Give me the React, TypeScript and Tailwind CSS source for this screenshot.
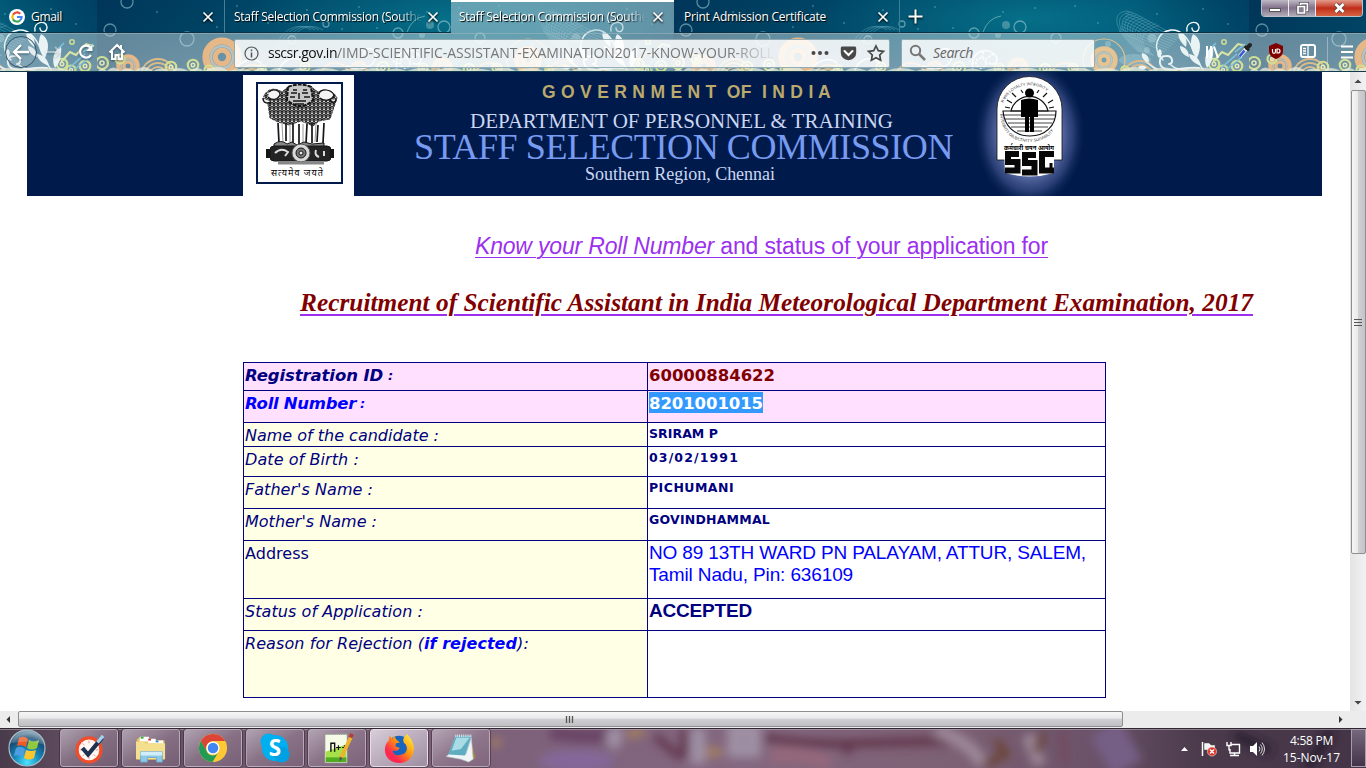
import React, { useLayoutEffect, useRef } from "react";

/** Single-line text whose tracking is adjusted so that it spans `w` pixels. */
function Fit({ w, className = "", children }: { w: number; className?: string; children: React.ReactNode }) {
  const ref = useRef<HTMLSpanElement>(null);
  useLayoutEffect(() => {
    const el = ref.current;
    if (!el) return;
    el.style.letterSpacing = "0px";
    const natural = el.getBoundingClientRect().width;
    const count = (el.textContent || "").length;
    el.style.letterSpacing = `${(w - natural) / count}px`;
  }, [w]);
  return (
    <span ref={ref} className={`inline-block whitespace-pre ${className}`}>
      {children}
    </span>
  );
}

function Ring({ x, y, r, c = "#f0923a", o = 1 }: { x: number; y: number; r: number; c?: string; o?: number }) {
  return (
    <g fill="none" stroke={c} opacity={o}>
      <circle cx={x} cy={y} r={r * 0.8} strokeWidth={r * 0.36} />
      <circle cx={x} cy={y} r={r * 0.34} strokeWidth={r * 0.26} stroke={c} />
      <circle cx={x} cy={y} r={r * 0.55} strokeWidth={r * 0.12} stroke="#f3e3cf" opacity={0.6} />
    </g>
  );
}

const bubbles = [
  [30, 2, 6], [13, 30, 6], [90, 39, 7], [301, 33, 5], [347, 27, 6], [383, 38, 5], [195, 40, 4], [229, 24, 3],
];
const dots = [
  [60, 12], [140, 6], [171, 23], [210, 10], [262, 7], [280, 28], [330, 12], [362, 8], [402, 6], [425, 23], [484, 14], [530, 9], [555, 24], [120, 27], [245, 29],
];
const greens = [
  [5, 63, 8], [23, 59, 6], [74, 67, 7], [96, 65, 7], [112, 70, 6], [165, 69, 5], [208, 67, 6], [286, 68, 8], [326, 68, 6], [372, 69, 7], [400, 68, 6], [452, 70, 5], [541, 64, 7], [550, 70, 6], [564, 66, 7],
];

function Wallpaper() {
  return (
    <svg className="absolute inset-0" width="1366" height="72">
      <defs>
        <linearGradient id="sea" x1="0" y1="0" x2="0" y2="1">
          <stop offset="0" stopColor="#004e70" />
          <stop offset="0.45" stopColor="#005474" />
          <stop offset="1" stopColor="#2b6888" />
        </linearGradient>
        <radialGradient id="glow">
          <stop offset="0" stopColor="#0a8ca0" stopOpacity="0.6" />
          <stop offset="1" stopColor="#0a8ca0" stopOpacity="0" />
        </radialGradient>
        <linearGradient id="shade" x1="0" x2="1">
          <stop offset="0" stopColor="#00284c" stopOpacity="0.65" />
          <stop offset="0.35" stopColor="#00304e" stopOpacity="0.2" />
          <stop offset="0.8" stopColor="#00304e" stopOpacity="0" />
          <stop offset="1" stopColor="#00284c" stopOpacity="0.35" />
        </linearGradient>
        <pattern id="tile" x="97" y="0" width="576" height="72" patternUnits="userSpaceOnUse">
          <rect width="576" height="72" fill="url(#sea)" />
          <ellipse cx="350" cy="18" rx="210" ry="55" fill="url(#glow)" />
          <rect width="576" height="72" fill="url(#shade)" />
          <g fill="#8fd3df" opacity="0.4">
            {dots.map(([x, y]) => <circle key={x} cx={x} cy={y} r="0.9" />)}
          </g>
          <g fill="none" stroke="#b2dbe2" strokeWidth="1.3" opacity="0.5">
            {bubbles.map(([x, y, r]) => <circle key={x} cx={x} cy={y} r={r} />)}
          </g>
          <g fill="#9ec8cf" opacity="0.4">
            <circle cx="333" cy="25" r="4" /><circle cx="325" cy="35" r="3" />
            <circle cx="435" cy="44" r="3" /><circle cx="479" cy="38" r="4.500" /><circle cx="474" cy="50" r="3" />
            <ellipse cx="462" cy="60" rx="16" ry="6" fill="#7db8cc" />
          </g>
          <g fill="none" stroke="#a9d8e4" strokeWidth="0.5" opacity="0.55">
            {[0, 1, 2, 3, 4, 5, 6, 7, 8, 9, 10].map((i) => (
              <path key={i} d={`M${454 + i * 3.2} ${11 + i * 1.4} C${438 + i * 3} ${12 + i * 2} ${440 + i * 2.2} ${30 + i} ${466 + i * 1.5} ${52 + i * 0.4}`} />
            ))}
            {[0, 1, 2, 3, 4, 5, 6, 7, 8].map((i) => (
              <path key={`s${i}`} d={`M${454 - i} ${11 + i * 2.5} C${468 - i} ${14 + i * 3} ${486 - i} ${30 + i * 2} ${508 - i * 2} ${36 + i * 2}`} />
            ))}
            {[0, 4, 8, 12].map((d) => (
              <path key={`w${d}`} d={`M${170 + d} 66 C${178 + d} 38 ${194 + d} 18 ${214 + d} 30`} />
            ))}
          </g>
          <path d="M310 32q5-14 18-16" fill="none" stroke="#6fb3b6" strokeWidth="0.8" />
          <Ring x={125} y={57} r={20} />
          <Ring x={31} y={66} r={12} />
          <Ring x={431} y={60} r={14} c="#f0a648" />
          <circle cx="431" cy="60" r="4.500" fill="none" stroke="#f0a648" strokeWidth="4" />
          <circle cx="431" cy="60" r="21" fill="none" stroke="#d9a04e" strokeWidth="1.2" />
          <Ring x={262} y={69} r={9} o={0.8} />
          <Ring x={345} y={68} r={11} c="#dfa353" />
          <g fill="none" stroke="#d8953f" strokeWidth="1.800">
            <circle cx="61" cy="76" r="17" /><circle cx="61" cy="76" r="13" /><circle cx="61" cy="76" r="9" />
            <circle cx="155" cy="79" r="14" /><circle cx="155" cy="79" r="10" />
            <circle cx="238" cy="78" r="15" /><circle cx="392" cy="77" r="14" />
            <circle cx="467" cy="79" r="18" /><circle cx="467" cy="79" r="14" />
          </g>
          <circle cx="505" cy="74" r="6" fill="#dd953b" />
          {greens.map(([x, y, r]) => (
            <g key={x} fill="none" stroke="#cedb4e">
              <circle cx={x} cy={y} r={r * 0.75} strokeWidth="2.2" />
              <circle cx={x} cy={y} r={r * 0.25} strokeWidth="1.6" stroke="#e9e58a" />
            </g>
          ))}
          <circle cx="551" cy="42" r="2.2" fill="none" stroke="#c3d550" strokeWidth="1.500" />
          <path d="M540 62l9-10 6 3 10-11 8 2" stroke="#d7e36a" strokeWidth="2" fill="none" />
          <g fill="none" stroke="#f4fbfb" strokeLinecap="round" strokeWidth="1.400">
            <path d="M490 60C478 48 484 32 498 30c12-1 18 10 22 20 3 9 6 14 10 20" />
            <path d="M526 68c-12-2-26 4-34 1-8-4-6-13 1-13 7-1 8 8 3 8" strokeWidth="2" />
            <path d="M514 31c-2-9 11-12 12-4 0 6-7 6-7 1" />
            <path d="M484 69c-6-2-12-8-14-12m28 8c4 4 10 5 16 5" />
            <path d="M250 66c16 8 32-2 28-13-3-7-12-5-11 1M300 68c-3-12 8-22 20-15 8 6 2 14-4 10M182 70c4-11 16-15 24-8M140 67c8-8 17-10 24-4" />
          </g>
          <g fill="#f8fdfd">
            <path d="M520 34c8 4 9 14 4 24-6-5-8-16-4-24zM513 47c-6-5-9-11-7-16 6 3 9 9 7 16zM516 57c-6-2-9-6-9-11 6 1 9 6 9 11zM534 68c-4-8-1-18 6-22 1 9-1 17-6 22zM528 66c-8-3-12-8-12-12 7 1 11 6 12 12zM476 62c-5-1-8-5-7-9 5 1 7 4 7 9zM486 58c-3-3-2-7 1-9 3 3 2 7-1 9zM474 68c-4 2-7 2-9-1 3-2 6-2 9 1z" />
          </g>
          <g stroke="#f4fbfb" strokeWidth="2" strokeDasharray="2 1.500" fill="none">
            <circle cx="308" cy="63" r="5" /><path d="M296 61l6 3m8-12-1 7m11-5-7 5" />
          </g>
          <path d="M562 52l10-8m-24 24 16-14m-10 15 15-12m-32-8 6-6" stroke="#2fa8d8" strokeWidth="1.500" fill="none" />
          <path d="M0 72q5-6 10-1q6-7 13 0q7-5 15 0q9-8 18 0q8-5 16 0q9-6 20 0q8-6 15 0q16-8 24 0q12-4 25 0q8-6 16 0q8-6 22 0q8-6 19 0q15-6 30 0q12-5 24 0q8-6 22 0q9-5 21 0q15-6 27 0q18-7 30 0q12-5 28 0q12-7 24 0q15-6 28 0q16-8 27 0q18-7 32 0q22-7 45 0z" fill="#f3f0d4" opacity="0.75" />
        </pattern>
      </defs>
      <rect width="1366" height="72" fill="url(#tile)" />
    </svg>
  );
}

function Close() {
  return (
    <svg width="12" height="12" viewBox="0 0 12 12" className="shrink-0 drop-shadow-[0_1px_1px_#000]">
      <path d="M1.500 1.500l9 9m0-9l-9 9" stroke="#fff" strokeWidth="1.700" />
    </svg>
  );
}

const ui = "font-['Open_Sans','Noto_Sans',sans-serif]";
const tabText = "text-[12px] leading-[18px] text-white [text-shadow:1px_1px_1px_#000]";

function Tabs() {
  return (
    <div className="relative flex h-[33px]">
      <div className="flex w-[225px] items-center border-r border-[#4a7e94] border-b border-b-[#0d3145] pt-px pr-[10px] pl-[9px]">
        <svg width="16" height="16" viewBox="0 0 16 16" className="mr-[6px]">
          <circle cx="8" cy="8" r="8" fill="#fff" />
          <g fill="none" strokeWidth="2.200">
            <path d="M4 5.800A4.600 4.600 0 0 1 11.200 4.700" stroke="#ea4335" />
            <path d="M4 10.200a4.600 4.600 0 0 1 0-4.400" stroke="#fbbc05" />
            <path d="M11 11.500A4.600 4.600 0 0 1 4 10.200" stroke="#34a853" />
            <path d="M8 8h4.600a4.600 4.600 0 0 1-1.600 3.500" stroke="#4285f4" />
          </g>
        </svg>
        <Fit w={31} className={tabText}>Gmail</Fit>
        <span className="flex-1" />
        <Close />
      </div>
      <div className="flex w-[226px] items-center border-b border-[#0d3145] pt-px pr-[12px] pl-[9px]">
        <span className="flex w-[190px] [mask-image:linear-gradient(to_right,#000_87%,#0000_99%)]">
          <Fit w={189} className={tabText}>Staff Selection Commission (Southe</Fit>
        </span>
        <span className="flex-1" />
        <Close />
      </div>
      <div className="flex w-[223px] items-center border-t-2 border-white bg-[#a3c8d2]/60 pr-[10px] pb-[2px] pl-[8px]">
        <span className="flex w-[190px] [mask-image:linear-gradient(to_right,#000_87%,#0000_99%)]">
          <Fit w={189} className={tabText}>Staff Selection Commission (Southe</Fit>
        </span>
        <span className="flex-1" />
        <Close />
      </div>
      <div className="flex w-[226px] items-center border-r border-r-[#3f7d94] border-b border-b-[#0d3145] pt-px pr-[10px] pl-[10px]">
        <Fit w={142} className={tabText}>Print Admission Certificate</Fit>
        <span className="flex-1" />
        <Close />
      </div>
      <div className="flex flex-1 items-center border-b border-[#0d3145] pl-[8px]">
        <svg width="15" height="15" viewBox="0 0 15 15" className="drop-shadow-[0_1px_1px_#000]">
          <path d="M7.500 .5v14M.5 7.500h14" stroke="#fff" strokeWidth="2" />
        </svg>
      </div>
      <div className="absolute top-0 left-[1261px] flex h-[17px] w-[102px] overflow-hidden rounded-b-[4px] border border-t-0 border-[#e6e2e8]/80">
        <div className="flex w-[27px] items-end justify-center border-r border-[#eee] bg-linear-to-b from-[#c0b9c5] via-[#81718b] to-[#b3abb8] pb-[4px]">
          <span className="h-[4px] w-[12px] border border-[#555] bg-white" />
        </div>
        <div className="flex w-[27px] items-center justify-center border-r border-[#eee] bg-linear-to-b from-[#c0b9c5] via-[#81718b] to-[#b3abb8]">
          <svg width="13" height="13" viewBox="0 0 13 13" fill="#8a7d93">
            <path d="M4.500 1.500h7v7h-7z" stroke="#555" strokeWidth="3" />
            <path d="M4.500 1.500h7v7h-7z" stroke="#fff" strokeWidth="1.500" />
            <path d="M2 4.500h6.500V11H2z" stroke="#555" strokeWidth="3" />
            <path d="M2 4.500h6.500V11H2z" stroke="#fff" strokeWidth="1.700" />
          </svg>
        </div>
        <div className="flex flex-1 items-center justify-center bg-linear-to-b from-[#e29a8b] via-[#c02b16] to-[#d66243]">
          <svg width="13" height="12" viewBox="0 0 13 12">
            <path d="M2.500 2l8 8m0-8l-8 8" stroke="#544" strokeWidth="4.500" />
            <path d="M2.500 2l8 8m0-8l-8 8" stroke="#fff" strokeWidth="2.800" />
          </svg>
        </div>
      </div>
    </div>
  );
}

function Toolbar() {
  return (
    <div className="relative flex h-[39px] items-center border-t border-[#9bb6bf]/60 border-b border-b-[#123c4e] bg-[#d9e6e9]/45 pt-px">
      <svg width="234" height="38" viewBox="0 0 234 38" className="shrink-0" fill="none">
        <circle cx="21" cy="18" r="15.500" fill="#c2d0db" fillOpacity=".2" stroke="#35536a" strokeWidth="1" />
        <g className="drop-shadow-[0_1px_1px_#1238]">
          <path d="M29 18H14m7-7-7 7 7 7" stroke="#fff" strokeWidth="2.300" />
          <path d="M46 18h14m-5-5 5 5-5 5" stroke="#fff" strokeOpacity=".45" strokeWidth="2" />
          <path d="M90.500 13.500A6 6 0 1 0 91 21" stroke="#fff" strokeWidth="2.200" />
          <path d="M92.500 10.500v6.500H86z" fill="#fff" />
          <path d="M109.500 18.500 117 11l7.500 7.500M112 17v8h3.500v-4h3v4h3.500v-8" stroke="#fff" strokeWidth="2.100" />
          <path d="M121 11v4" stroke="#fff" strokeWidth="2" />
        </g>
      </svg>
      <div className="flex h-[29px] w-[656px] shrink-0 items-center rounded-[2px] border border-[#557985]/60 bg-white/85 pl-[9px]">
        <svg width="15" height="15" viewBox="0 0 15 15" className="mr-[9px] shrink-0" fill="none" stroke="#555">
          <circle cx="7.500" cy="7.500" r="6.500" strokeWidth="1.200" />
          <path d="M7.500 6.500v5m0-8v1.700" strokeWidth="1.500" />
        </svg>
        <span className="flex w-[512px] shrink-0 text-[14px] leading-[20px] whitespace-nowrap text-[#777] [mask-image:linear-gradient(to_right,#000_90%,#0000_99%)]">
          <Fit w={69} className="text-[#111]">sscsr.gov.in</Fit>
          <Fit w={437}>/IMD-SCIENTIFIC-ASSISTANT-EXAMINATION2017-KNOW-YOUR-ROLL</Fit>
        </span>
        <svg width="78" height="20" viewBox="0 0 78 20" className="ml-[29px] shrink-0" fill="#484848">
          <circle cx="4.500" cy="10" r="2" /><circle cx="11" cy="10" r="2" /><circle cx="17.500" cy="10" r="2" />
          <path d="M33.500 3.500h12c1 0 1.700.6 1.700 1.700V10a7.700 7.200 0 0 1-15.400 0V5.200c0-1 .6-1.700 1.700-1.700z" />
          <path d="M35.500 8l4 4 4-4" stroke="#fff" strokeWidth="2" fill="none" strokeLinecap="round" />
          <path d="M67 3l2.300 4.700 5.200.7-3.800 3.600.9 5.200L67 14.700l-4.600 2.500.9-5.200-3.800-3.600 5.200-.7z" fill="none" stroke="#484848" strokeWidth="1.700" />
        </svg>
      </div>
      <div className="ml-[11px] flex h-[29px] w-[194px] shrink-0 items-center rounded-[2px] border border-[#557985]/60 bg-white/85 pl-[7px]">
        <svg width="18" height="18" viewBox="0 0 18 18" fill="none" stroke="#777" strokeWidth="2">
          <circle cx="6.500" cy="6.500" r="4.700" /><path d="M10 10l6 6" strokeWidth="2.500" />
        </svg>
        <Fit w={40} className="ml-[6px] text-[14px] leading-[20px] text-[#666] italic">Search</Fit>
      </div>
      <svg width="271" height="38" viewBox="1095 0 271 38" className="shrink-0" fill="none">
        <path d="M1207 12v12m4-12v12m3-11.500 4 11.500" stroke="#fff" strokeWidth="2" />
        <path d="M1239.500 22.500l7-8" stroke="#eee" strokeWidth="4" />
        <path d="M1239.500 22.500l5-6" stroke="#3158d7" strokeWidth="2.500" />
        <path d="M1244.500 12l4.500 4.500" stroke="#222" strokeWidth="2.500" /><path d="M1247 14l3-3" stroke="#222" strokeWidth="4" strokeLinecap="round" />
        <path d="M1276 9l7 3v5c0 4-3 6.500-7 8-4-1.500-7-4-7-8v-5z" fill="#800000" />
        <path d="M1272.500 15v2.500c0 2.500 3 2.500 3 0V15m1.500 0v4h1a2 2 0 0 0 0-4z" stroke="#fff" strokeWidth="1.200" />
        <rect x="1301" y="11" width="14" height="12" rx="2" stroke="#fff" strokeWidth="2" />
        <path d="M1308 11v12m-5-8.500h3m-3 2.500h3m-3 2.500h3" stroke="#fff" strokeWidth="1.300" />
        <path d="M1327.500 3v29" stroke="#d8e4ea" strokeOpacity=".45" />
        <path d="M1341 12.500h12m-12 5.500h12m-12 5.500h12" stroke="#fff" strokeWidth="2.200" />
      </svg>
    </div>
  );
}

function Emblem() {
  return (
    <svg width="83" height="98" viewBox="0 0 83 98" fill="none" stroke="#161616">
      <defs>
        <pattern id="fur" width="4" height="4" patternUnits="userSpaceOnUse">
          <rect width="4" height="4" fill="#d2d2d2" />
          <path d="M0 1l2 2 2-2M0 3l1 1m2 0 1-1" stroke="#111" strokeWidth=".8" fill="none" />
        </pattern>
      </defs>
      <path d="M7 10c4-6 11-6 17-2l7-6h21l8 6c8-4 16-1 19 6l-3 9-4 12-11 2-6 5-12-5-12 4-11-3-8-4-2-14-5-6z" fill="url(#fur)" stroke="#444" strokeDasharray="3 1" />
      <path d="M11 8c4-4 11-2 11 3-3 5-8 6-12 2m51-3c2-6 12-5 15 1-2 5-9 7-14 3" fill="#f4f4f4" strokeWidth="1.200" />
      <path d="M5 14c0 5 4 6 8 4m59-2c2 3 6 3 6-1" fill="#eee" strokeWidth="1.500" />
      <path d="M30 3q12-5 23 0l2 13q-12 12-26 0z" fill="#c8c8c8" strokeWidth="2" strokeDasharray="4 1" />
      <path d="M33 9h6m5 0h6m-9 0v6m-6 2h13m-11 3h9M35 6h4m6 0h4M32 13h5m9 0h6" strokeWidth="1.500" />
      <path d="M20 39l1 20m7-20v18m7-18v21m6-20v21m8-21-1 20m6-21v20m6-18-1 17m7-19-1 20" strokeWidth="1.700" />
      <path d="M24 40l1 18m7-18v18m13-18v18m13-18-1 18" stroke="#999" strokeWidth="1" />
      <path d="M16 60q7-5 13 0l5-2 5 3 7-3 8 2 12-1v5H16z" fill="#888" />
      <rect x="12" y="62" width="61" height="15" rx="4" fill="#242424" />
      <path d="M10 65v9m64-9v9" strokeWidth="4" />
      <circle cx="43" cy="69" r="9" fill="#d8d8d8" stroke="#555" />
      <circle cx="43" cy="69" r="5" fill="#777" /><circle cx="43" cy="69" r="2" fill="#eee" />
      <path d="M17 69q6-6 13-1l-3 4m31-6q-2 5 3 7m5-6v5" stroke="#ddd" strokeWidth="2" />
      <path d="M20 79h46" stroke="#888" strokeWidth="3" />
    </svg>
  );
}

function SscLogo() {
  return (
    <svg width="110" height="124" viewBox="0 0 110 124">
      <defs>
        <radialGradient id="halo">
          <stop offset="0" stopColor="#c3cdf0" /><stop offset=".6" stopColor="#6475ad" stopOpacity=".85" />
          <stop offset=".8" stopColor="#3a4d87" stopOpacity=".7" />
          <stop offset="1" stopColor="#0d2758" stopOpacity="0.1" />
        </radialGradient>
        <path id="arc" d="M27 36a28 28 0 0 1 55 0" />
        <path id="under" d="M25 42q3 28 30 28 26-1 29-28" />
      </defs>
      <ellipse cx="55" cy="62" rx="54" ry="72" fill="url(#halo)" />
      <path d="M22 88V37a32 32 0 0 1 65 0v51z" fill="#fff" stroke="#111" strokeWidth=".8" />
      <g stroke="#111" strokeWidth="1.200" fill="none">
        <path d="M36 39a19 19 0 0 1 37 0z" />
        <path d="M37 31l-5-3m9-3-4-4m11 0-2-3m27 13 5-3m-10-3 4-4m-10 0 2-3M35 36l-5-1m44 1 5-1" />
        <path d="M28 39h53c0 15-11 25-26 25S29 54 28 39z" />
        <path d="M29 43h51M30 47h49M33 51h44M36 55h37M42 59h25" strokeWidth=".8" />
      </g>
      <circle cx="54.500" cy="21" r="4.500" />
      <path d="M46 28q8-3 17 0v17h-4V32v28h-4V45h-1v15h-4V32v13h-4z" />
      <text className="font-['Liberation_Sans',sans-serif]" fontSize="4" fill="#444"><textPath href="#arc" startOffset="5">समानता  LOYALTY  INTEGRITY</textPath></text>
      <text className="font-['Liberation_Sans',sans-serif]" fontSize="4" fill="#333"><textPath href="#under">INTEGRITY OBJECTIVITY SUITABILITY</textPath></text>
      <text x="29" y="78" fontSize="7" fontWeight="700" textLength="50" lengthAdjust="spacingAndGlyphs">कर्मचारी चयन आयोग</text>
      <path d="M29 79l1 22q25 7 49 0V79z" fill="#fff" />
      <g fill="none" stroke="#080808" strokeWidth="6">
        <path d="M44 82H33v8h9.500v8.500H30" /><path d="M61 83H50v8h9.500v9.500H47" /><path d="M79 82H67v16.500h12" /><path d="M76 98v-7" strokeWidth="3" />
      </g>
    </svg>
  );
}

function Banner() {
  return (
    <div className="ml-[27px] flex h-[124px] w-[1295px] bg-[#001b4b]">
      <div className="mt-[3px] ml-[216px] h-[121px] w-[111px] shrink-0 bg-white pt-[7px] pl-[13px]">
        <div className="relative h-[102px] w-[87px] border-2 border-[#001b4b]">
          <Emblem />
          <Fit w={56} className="absolute top-[83px] left-[13px] font-sans text-[9px] leading-[12px] text-black">सत्यमेव जयते</Fit>
        </div>
      </div>
      <div className="ml-[60px] flex w-[540px] flex-col font-['Liberation_Serif',serif] text-[#cbd7f3]">
        <Fit w={289} className="mt-[9px] ml-[128px] self-start font-['Liberation_Sans',sans-serif] text-[17.500px] leading-[22px] font-bold text-[#bba96d]">G O V E R N M E N T  OF  I N D I A</Fit>
        <Fit w={423} className="mt-[7px] ml-[56px] self-start text-[21px] leading-[23px]">DEPARTMENT OF PERSONNEL &amp; TRAINING</Fit>
        <Fit w={539} className="-mt-[1px] self-start text-[36px] leading-[30px] text-[#789bf1]">STAFF SELECTION COMMISSION</Fit>
        <Fit w={190} className="mt-[2px] ml-[171px] self-start text-[18px] leading-[20px]">Southern Region, Chennai</Fit>
      </div>
      <div className="ml-[21px]"><SscLogo /></div>
    </div>
  );
}

const label = "flex items-start border-r border-b border-[#000080] pl-px";
const value = "flex items-start border-b border-[#000080] pl-px";
const plain = "mt-[2px] text-[16px] leading-[21px] italic";
const strong = "text-[12.500px] leading-[16px] font-bold mt-[3px]";

function Row({ h, pink, l, v }: { h: string; pink?: boolean; l: React.ReactNode; v?: React.ReactNode }) {
  return (
    <div className={`grid grid-cols-[404px_457px] ${h}`}>
      <div className={`${label} ${pink ? "bg-[#ffe0ff]" : "bg-[#ffffe6]"}`}>{l}</div>
      <div className={`${value} ${pink ? "bg-[#ffe0ff]" : "bg-white"}`}>{v}</div>
    </div>
  );
}

function Details() {
  return (
    <div className="ml-[243px] w-[863px] border border-b-0 border-[#000080] font-['DejaVu_Sans',sans-serif] text-[#000080]">
      <Row h="h-[28px]" pink
        l={<span className="flex pt-[2px] leading-[22px] font-bold italic"><Fit w={138} className="text-[16.500px]">Registration ID</Fit><span className="ml-[5px] text-[13px] leading-[22px]">:</span></span>}
        v={<Fit w={126} className="pt-[2px] text-[16.500px] leading-[22px] font-bold text-[#800000]">60000884622</Fit>} />
      <Row h="h-[32px]" pink
        l={<span className="flex pt-[2px] leading-[22px] font-bold text-[#0000ff] italic"><Fit w={111} className="text-[16.500px]">Roll Number</Fit><span className="ml-[4px] text-[13px] leading-[22px]">:</span></span>}
        v={<Fit w={114} className="mt-[1px] h-[21px] bg-[#3399ff] pt-px text-[16.500px] leading-[22px] font-bold text-white">8201001015</Fit>} />
      <Row h="h-[24px]" l={<Fit w={194} className={plain}>Name of the candidate :</Fit>} v={<Fit w={69} className={strong}>SRIRAM P</Fit>} />
      <Row h="h-[30px]" l={<Fit w={114} className={plain}>Date of Birth :</Fit>} v={<Fit w={90} className={strong}>03/02/1991</Fit>} />
      <Row h="h-[32px]" l={<Fit w={128} className={plain}>Father's Name :</Fit>} v={<Fit w={85} className={strong}>PICHUMANI</Fit>} />
      <Row h="h-[32px]" l={<Fit w={132} className={plain}>Mother's Name :</Fit>} v={<Fit w={121} className={strong}>GOVINDHAMMAL</Fit>} />
      <Row h="h-[58px]" l={<Fit w={64} className="mt-[2px] text-[16px] leading-[21px]">Address</Fit>}
        v={<div className="flex flex-col items-start pt-px font-['Liberation_Sans',sans-serif] text-[19px] leading-[22px] text-[#0000ff]"><Fit w={437}>NO 89 13TH WARD PN PALAYAM, ATTUR, SALEM,</Fit><Fit w={204}>Tamil Nadu, Pin: 636109</Fit></div>} />
      <Row h="h-[32px]" l={<Fit w={178} className={plain}>Status of Application :</Fit>}
        v={<Fit w={103} className="mt-px font-['Liberation_Sans',sans-serif] text-[19px] leading-[22px] font-bold">ACCEPTED</Fit>} />
      <Row h="h-[67px]" l={<span className="flex"><Fit w={179} className={plain}>Reason for Rejection (</Fit><Fit w={93} className={`${plain} font-bold text-[#0000ff]`}>if rejected</Fit><Fit w={12} className={plain}>):</Fit></span>} />
    </div>
  );
}

function Page() {
  return (
    <div className="h-[639px] w-[1350px] shrink-0 overflow-hidden bg-white">
      <Banner />
      <div className="mt-[35px] ml-[475px] flex font-['Liberation_Sans',sans-serif] text-[23px] leading-[30px] text-[#9b30ef] [text-underline-offset:3px]">
        <Fit w={239} className="italic underline decoration-1">Know your Roll Number</Fit>
        <Fit w={334} className="underline decoration-1"> and status of your application for</Fit>
      </div>
      <div className="mt-[24px] ml-[300px] h-[77px] font-['Liberation_Serif',serif] text-[25.300px] leading-[34px] font-bold text-[#800000] italic">
        <Fit w={953} className="underline decoration-[#9b30ef] decoration-2 [text-underline-offset:3px]">Recruitment of Scientific Assistant in India Meteorological Department Examination, 2017</Fit>
      </div>
      <Details />
    </div>
  );
}

function VScroll() {
  return (
    <div className="flex h-[639px] w-[16px] flex-col items-center bg-linear-to-r from-[#e4e4e4] to-[#f2f2f2]">
      <svg width="16" height="18"><path d="M4.500 11h7L8 7.500z" fill="#444" /></svg>
      <div className="flex h-[464px] w-[15px] flex-col items-center justify-center rounded-[2px] border border-[#8e8e8e] bg-[linear-gradient(to_right,#f6f6f6_0%,#e9e9eb_45%,#d2d2d5_50%,#c2c2c7_100%)] pr-px pb-px">
        <svg width="8" height="8"><path d="M0 1.500h8M0 4.500h8M0 7.500h8" stroke="#555" /></svg>
      </div>
      <span className="flex-1" />
      <svg width="16" height="17"><path d="M4.500 7h7L8 10.500z" fill="#444" /></svg>
    </div>
  );
}

function HScroll() {
  return (
    <div className="flex h-[17px] bg-[#ececec]">
      <svg width="18" height="17"><path d="M10 5v7L6.500 8.500z" fill="#333" /></svg>
      <div className="flex h-[16px] w-[1105px] items-center justify-center rounded-[2px] border border-[#8e8e8e] bg-[linear-gradient(to_bottom,#f6f6f6_0%,#e9e9eb_45%,#d0d0d3_50%,#c0c0c4_100%)] pr-[2px]">
        <svg width="9" height="7"><path d="M1.500 0v7M4.500 0v7M7.500 0v7" stroke="#555" strokeWidth="1.300" /></svg>
      </div>
      <span className="flex-1" />
      <svg width="43" height="17"><path d="M16 5v7l3.500-3.500z" fill="#333" /></svg>
    </div>
  );
}

function TaskWallpaper() {
  return (
    <svg width="1366" height="40" className="absolute inset-0">
      <defs>
        <linearGradient id="bar" x1="0" x2="1">
          <stop offset="0" stopColor="#493b4b" /><stop offset=".05" stopColor="#604c60" /><stop offset=".32" stopColor="#7c6079" />
          <stop offset=".55" stopColor="#83677f" /><stop offset=".7" stopColor="#7c6073" /><stop offset=".8" stopColor="#6b5269" />
          <stop offset=".88" stopColor="#4a3a4b" /><stop offset="1" stopColor="#443447" />
        </linearGradient>
        <filter id="soft" filterUnits="userSpaceOnUse" x="0" y="-20" width="1366" height="80"><feGaussianBlur stdDeviation="5" /></filter>
      </defs>
      <rect width="1366" height="40" fill="url(#bar)" />
      <g filter="url(#soft)" fill="none">
        <path d="M550 4q40 8 70 0" stroke="#6b4566" strokeWidth="15" />
        <ellipse cx="577" cy="33" rx="38" ry="11" fill="#84689a" />
        <path d="M612 0q6 10-2 18M698 0v36M735 2h18v20h-18z" stroke="#9f90a4" strokeWidth="15" />
        <path d="M655 8l26 22M684 0v30" stroke="#63394f" strokeWidth="8" />
        <path d="M765 10q38 6 80 6 37-2 120-3M850 12l-3 14" stroke="#603449" strokeWidth="8" />
        <path d="M627 7l17-5M706 24h16M496 10v9" stroke="#a5805f" strokeWidth="9" />
        <path d="M770 28q30-4 60 8" stroke="#94677c" strokeWidth="16" />
        <path d="M1062 3l3 34" stroke="#74485c" strokeWidth="7" />
        <path d="M936 2q35 12 47 35m45-30 12 30" stroke="#9c8797" strokeWidth="13" />
        <path d="M996 12l10 14-22 11m52-12 6-20" stroke="#6b4233" strokeWidth="7" />
        <path d="M1105 0l22 40" stroke="#765e85" strokeWidth="34" />
        <path d="M1235 7l36 16m60-20q-12 20-24 37" stroke="#281d2e" strokeWidth="9" />
      </g>
      <path d="M0 .5h1366" stroke="#302831" /><path d="M0 1.500h1366" stroke="#b6a8b5" strokeOpacity=".6" />
    </svg>
  );
}

const icons: React.ReactNode[] = [
  <g key="ticktick"><circle cx="16" cy="18" r="14.500" fill="#f04d2a" /><circle cx="16" cy="18" r="11" fill="#fff8f4" /><path d="M16 8v3m10 7h-3M16 28v-3M6 18h3m0-7 2 2m12 12-2-2M9 25l2-2" stroke="#e99786" /><path d="M9 16l6 7L30 5" stroke="#1f3150" strokeWidth="4.500" fill="none" /><path d="M25 10l6-7" stroke="#a6d4f0" strokeWidth="3.500" /></g>,
  <g key="explorer"><path d="M3 5h9l2 3h16v20H1V7z" fill="#e5c96b" stroke="#c4a65a" /><path d="M4 4h10v5H4zm9 2h8v5h-8zm8 2h8v5h-8z" fill="#fff" /><path d="M5 5h3" stroke="#2cad34" strokeWidth="2" /><path d="M13 7h3" stroke="#cf4435" strokeWidth="2" /><path d="M21 9h3" stroke="#2c8bd5" strokeWidth="2" /><path d="M0 9h8l2 2h21v17H0z" fill="#f4df8f" /><path d="M5 31V20h23v11h-6v-5H12v5z" fill="#8dcaea" stroke="#6fa9ca" /><path d="M5 20h23v4H5z" fill="#d1eefa" /></g>,
  <g key="chrome"><circle cx="16" cy="16" r="15" fill="#fcc934" /><path d="M3 8.500A15 15 0 0 1 29 8.500H16a8 8 0 0 0-7 11z" fill="#db4437" /><path d="M3 8.500A15 15 0 0 0 15.500 31L22 20a7 7 0 0 1-13-1z" fill="#219b55" /><circle cx="16" cy="16" r="7" fill="#fff" /><circle cx="16" cy="16" r="5.600" fill="#4285f4" /></g>,
  <g key="skype"><circle cx="16" cy="16" r="14" fill="#00aff0" /><circle cx="9" cy="9" r="8.500" fill="#00aff0" /><circle cx="23" cy="23" r="8.500" fill="#00a1e2" /><text x="16" y="24.500" textAnchor="middle" fontSize="24" fontWeight="700" fill="#fff" className="font-['Open_Sans',sans-serif]">S</text></g>,
  <g key="npp"><path d="M3 1h24v31H3z" fill="#f6fbe8" stroke="#888" /><path d="M4 20l22-8v19H4z" fill="#a6e04a" /><path d="M4 26h22v5H4z" fill="#4fac20" /><path d="M4 1h23" stroke="#999" strokeWidth="2" strokeDasharray="1 1" /><path d="M9.500 20V11h4v9" fill="none" stroke="#111" strokeWidth="1.500" /><path d="M15 15.500h5m-2.500-2.500v5m4-2.500h5m-2.500-2.500v5" stroke="#111" strokeWidth="1.200" /><path d="M20 27L31 4" stroke="#efb32c" strokeWidth="4" /><path d="M30.500 5l1.500-4" stroke="#b63a35" strokeWidth="4" /><path d="M18.500 30l.5-5 3.500 2z" fill="#555" /></g>,
  <g key="firefox"><defs><linearGradient id="fox" x1=".9" y1="0" x2=".1" y2=".8"><stop offset="0" stopColor="#fff044" /><stop offset=".45" stopColor="#ff980e" /><stop offset=".85" stopColor="#ff2850" /></linearGradient></defs><circle cx="16" cy="15" r="12" fill="#1565c0" /><path d="M6 3l-1 5C-3 16 1 32 16 32c14 0 19-14 14-23-1-4-4-5-5-8-5 3-6 8-2 11 3 5 1 10-4 11-6 2-9 0-10-4l5 0 3-3-5-2 1-3 4-1-4-3-2-4-2 3z" fill="url(#fox)" /></g>,
  <g key="notepad"><path d="M25 3l7 23-6 4z" fill="#a5834e" /><path d="M10 3h17l-3 26-22-5z" fill="#72b8c9" /><path d="M0 25l4-3 17 1 6-18 2 23-5 3-8-3z" fill="#f0f6f7" stroke="#b4c2c6" strokeWidth=".7" /><path d="M10 4h16l-6 20-17-1z" fill="#5fadc0" /><path d="M11 5h14l-9 12-10 2z" fill="#a9dce4" /><path d="M10 3h17" stroke="#dce5e8" strokeWidth="3" strokeDasharray="1 1" /></g>,
];

function Taskbar() {
  return (
    <div className={`relative flex h-[40px] overflow-hidden ${ui}`}>
      <TaskWallpaper />
      <svg width="60" height="40" className="relative shrink-0">
        <defs>
          <radialGradient id="orb" cx=".5" cy=".9" r=".9"><stop offset="0" stopColor="#4be4ff" /><stop offset=".4" stopColor="#1687bb" /><stop offset=".75" stopColor="#174a70" /><stop offset="1" stopColor="#a0b6c4" /></radialGradient>
        </defs>
        <circle cx="27" cy="20" r="18" fill="url(#orb)" stroke="#a8bdc9" strokeWidth="1.200" />
        <path d="M19 10q5-3 9 1l-2 8q-4-3-9-1z" fill="#ee5b26" />
        <path d="M29 12q4 3 10 0l-2 8q-5 3-10 0z" fill="#91c83e" />
        <path d="M16 20q5-3 9 1l-2 8q-4-3-9-1z" fill="#4c9ee1" />
        <path d="M26 22q5 2 10 0l-2 8q-5 3-10 0z" fill="#fac52e" />
        <path d="M11 15q6-12 20-11 11 2 13 13-12-6-33-2z" fill="#fff" opacity=".2" />
      </svg>
      <div className="relative flex gap-[4px] pt-[1px]">
        {icons.map((icon, i) => (
          <div key={i} className={`flex h-[38px] w-[58px] items-center justify-center rounded-[3px] border pb-px outline outline-[#33283588] ${i === 5 ? "border-[#e6dde5] bg-linear-to-br from-[#e3d9e4]/90 to-[#a292a5]/90" : "border-[#c0afbf]/80 bg-linear-to-br from-[#c7bdc9]/75 via-[#9a8497]/60 to-[#826a80]/50"}`}>
            <svg width="30" height="30" viewBox="0 0 32 32" className="-ml-px overflow-visible">{icon}</svg>
          </div>
        ))}
      </div>
      <span className="flex-1" />
      <svg width="102" height="40" viewBox="1172 0 102 40" className="relative shrink-0" fill="none">
        <path d="M1181 23h7l-3.500-4z" fill="#fff" />
        <path d="M1202.500 14v14" stroke="#fff" strokeWidth="1.500" />
        <path d="M1204 15h5l2 2h4v7h-4l-2-2h-5z" fill="#f5f5f5" stroke="#555" strokeWidth=".5" />
        <circle cx="1212" cy="23.500" r="4.500" fill="#df3229" stroke="#eee" strokeWidth=".6" />
        <path d="M1210 21.500l4 4m0-4l-4 4" stroke="#fff" strokeWidth="1.400" />
        <path d="M1231.500 16.500h8v8.500H1230v-4M1227 14v3.500h4V14m-2 3.500v5m5.500 2v3m-4.500 0h9" stroke="#fff" strokeWidth="1.400" />
        <path d="M1250 18h3l4-4v14l-4-4h-3z" fill="#fff" />
        <path d="M1259 18.500q2 2.500 0 5m1.500-7q3.500 4.500 0 9m1.500-11q5 6.500 0 13" stroke="#ddd" />
      </svg>
      <div className="relative flex w-[75px] flex-col items-center pt-[4px] text-[12px] leading-[17px] text-white">
        <Fit w={43}>4:58 PM</Fit>
        <Fit w={57}>15-Nov-17</Fit>
      </div>
      <span className="relative mt-[1px] ml-[2px] h-[38px] w-[15px] border border-[#aa9cac] bg-linear-to-b from-[#837589]/80 to-[#42344c]/80" />
    </div>
  );
}

export default function App() {
  return (
    <div className="h-[768px] w-[1366px] overflow-hidden bg-white">
      <div className={`relative h-[72px] ${ui}`}>
        <Wallpaper />
        <Tabs />
        <Toolbar />
      </div>
      <div className="flex">
        <Page />
        <VScroll />
      </div>
      <HScroll />
      <Taskbar />
    </div>
  );
}
